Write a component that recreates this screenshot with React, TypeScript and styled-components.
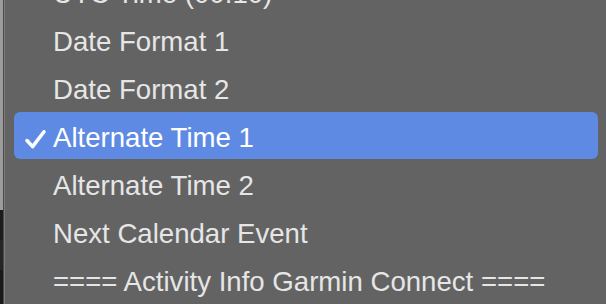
import React from "react";
import styled, { createGlobalStyle } from "styled-components";

const Global = createGlobalStyle`
  html, body { margin: 0; padding: 0; background: #636363; }
  body { width: 606px; height: 304px; overflow: hidden; }
  #root { height: 304px; }
`;

const Screen = styled.div`
  display: flex;
  width: 606px;
  height: 304px;
  overflow: hidden;
  font-family: "Liberation Sans", Arial, sans-serif;
`;

const BehindStrip = styled.div`
  width: 3px;
  flex: none;
  display: flex;
  flex-direction: column;
  border-right: 1px solid #4a4a4a;
`;

const BehindTop = styled.div`
  height: 210px;
  background: #9c9c9c;
`;

const BehindBottom = styled.div`
  flex: 1;
  background: linear-gradient(#1c1c1c 0, #1c1c1c 30px, #262626 30px, #262626 60px, #1a1a1a 60px);
`;

const Menu = styled.div`
  flex: 1;
  background: #636363;
  border-left: 1px solid #7b7b7b;
  overflow: hidden;
`;

const List = styled.ul`
  list-style: none;
  margin: -32px 8px 0 9px;
  padding: 0;
  display: flex;
  flex-direction: column;
  gap: 1px;
`;

const Item = styled.li<{ $selected?: boolean }>`
  display: flex;
  align-items: flex-start;
  height: 47px;
  box-sizing: border-box;
  padding-top: 5px;
  border-radius: 6px;
  background: ${(p) => (p.$selected ? "#5f8ae4" : "transparent")};
  color: ${(p) => (p.$selected ? "#ffffff" : "#e6e6e6")};
  font-size: 27.6px;
  line-height: 42px;
  white-space: nowrap;
`;

const CheckSlot = styled.span`
  width: 39px;
  flex: none;
  height: 42px;
  display: flex;
  align-items: center;
  padding-left: 11px;
  box-sizing: border-box;
`;

const Check = () => (
  <svg width="21" height="19" viewBox="0 0 21 19" style={{ marginTop: 3 }}>
    <path
      d="M2 10.5 L7.6 16.6 L19 1.8"
      fill="none"
      stroke="#ffffff"
      strokeWidth="3.5"
      strokeLinecap="round"
      strokeLinejoin="round"
    />
  </svg>
);

const items = [
  "UTC Time (00:10)",
  "Date Format 1",
  "Date Format 2",
  "Alternate Time 1",
  "Alternate Time 2",
  "Next Calendar Event",
  "==== Activity Info Garmin Connect ====",
];

export default function App() {
  return (
    <>
      <Global />
      <Screen>
        <BehindStrip>
          <BehindTop />
          <BehindBottom />
        </BehindStrip>
        <Menu>
          <List>
            {items.map((t) => {
              const sel = t === "Alternate Time 1";
              return (
                <Item key={t} $selected={sel}>
                  <CheckSlot>{sel && <Check />}</CheckSlot>
                  {t}
                </Item>
              );
            })}
          </List>
        </Menu>
      </Screen>
    </>
  );
}
